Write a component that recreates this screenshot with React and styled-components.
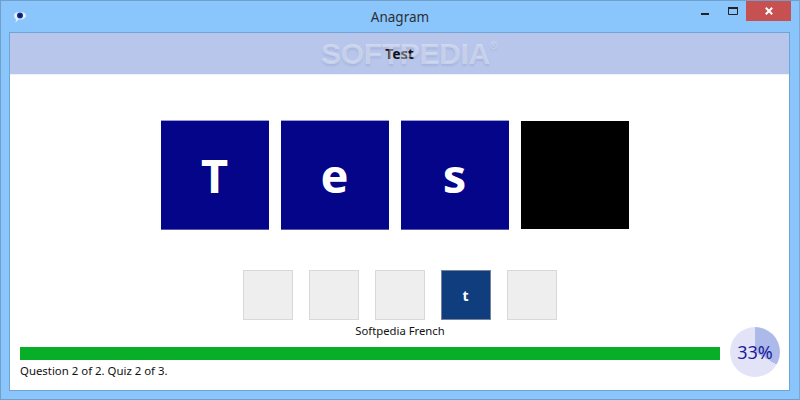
import styled, { createGlobalStyle } from "styled-components";

const GlobalStyle = createGlobalStyle`
  html, body { margin: 0; padding: 0; }
  body { width: 800px; height: 400px; overflow: hidden; font-family: "Noto Sans", "Open Sans", sans-serif; }
`;

const answer = [{ ch: "T" }, { ch: "e" }, { ch: "s" }, { ch: "", blank: true }];
const tray = ["", "", "", "t", ""];

function AppIcon() {
  return (
    <svg width="14" height="14" viewBox="0 0 14 14">
      <path d="M1 5.500C1 3 4 2 7 2s6 1 6 3.500S10 9.500 7 9.500H5.500L2.600 12.500 3 9C1.800 8.400 1 7 1 5.500Z" fill="#e6eefc" />
      <circle cx="7" cy="5.500" r="3" fill="#12309a" />
      <circle cx="7" cy="5.500" r="1.400" fill="#071a55" />
    </svg>
  );
}

function App() {
  return (
    <Win>
      <GlobalStyle />
      <TitleBar>
        <IconSlot><AppIcon /></IconSlot>
        <Title>Anagram</Title>
        <Controls>
          <MinBtn><svg width="8" height="2"><rect width="8" height="2" fill="#222" /></svg></MinBtn>
          <MaxBtn>
            <svg width="10" height="8"><path d="M.5 1.500h9v6h-9z" fill="none" stroke="#222" /><rect width="10" height="2" fill="#222" /></svg>
          </MaxBtn>
          <CloseBtn>
            <svg width="8" height="8" viewBox="0 0 8 8"><path d="M.8.800l6.400 6.400M7.200.800L.8 7.200" stroke="#fff" strokeWidth="2" /></svg>
          </CloseBtn>
        </Controls>
      </TitleBar>
      <Content>
        <Header>
          <Heading>Test</Heading>
          <Watermark>SOFTPEDIA<sup>®</sup></Watermark>
        </Header>
        <Letters>
          {answer.map((a, i) => (
            <LetterTile key={i} $blank={a.blank}>{a.ch}</LetterTile>
          ))}
        </Letters>
        <Tray>
          {tray.map((t, i) => (
            <TrayTile key={i} $filled={!!t}>{t}</TrayTile>
          ))}
        </Tray>
        <Footer>
          <Progress>
            <Label>Softpedia French</Label>
            <Bar />
            <Status>Question 2 of 2. Quiz 2 of 3.</Status>
          </Progress>
          <Dial>33%</Dial>
        </Footer>
      </Content>
    </Win>
  );
}

const Win = styled.div`
  box-sizing: border-box;
  width: 800px;
  height: 400px;
  display: flex;
  flex-direction: column;
  background: #8ac6fb;
  border: 1px solid #6f9fcb;
  border-right-color: #7aa8d4;
`;

const TitleBar = styled.div`
  height: 31px;
  display: grid;
  grid-template-columns: 1fr auto 1fr;
  align-items: start;
`;

const IconSlot = styled.div`
  padding: 9px 0 0 12px;
  line-height: 0;
`;

const Title = styled.div`
  padding-top: 7px;
  font-size: 13.500px;
  line-height: 18px;
  color: #2a2f38;
`;

const Controls = styled.div`
  display: flex;
  justify-content: flex-end;
  padding-right: 8px;
`;

const MinBtn = styled.div`
  width: 26px;
  height: 20px;
  display: flex;
  justify-content: center;
  padding-top: 12px;
  box-sizing: border-box;
`;

const MaxBtn = styled.div`
  width: 26px;
  height: 20px;
  display: flex;
  justify-content: center;
  padding-top: 6px;
  box-sizing: border-box;
  margin-left: 2px;
`;

const CloseBtn = styled.div`
  width: 45px;
  height: 20px;
  background: #c75050;
  display: flex;
  align-items: center;
  justify-content: center;
`;

const Content = styled.div`
  flex: 1;
  margin: 0 9px 8px 8px;
  background: #fff;
  border: 1px solid #6fa5d6;
`;

const Header = styled.div`
  position: relative;
  height: 41px;
  background: #b8c6ec;
  display: flex;
  align-items: center;
  justify-content: center;
  border-bottom: 1px solid #eef1fb;
`;

const Heading = styled.span`
  font-size: 14px;
  font-weight: 700;
  color: #111;
`;

const Watermark = styled.span`
  position: absolute;
  left: 311px;
  top: 3px;
  font-family: "Liberation Sans", sans-serif;
  font-size: 30px;
  font-weight: 700;
  line-height: 36px;
  letter-spacing: -0.3px;
  color: rgba(255, 255, 255, 0.34);
  text-shadow: 0 2px 2px rgba(90, 100, 140, 0.16);
  pointer-events: none;

  sup {
    font-size: 10px;
    font-weight: 400;
    vertical-align: 15px;
    line-height: 0;
  }
`;

const Letters = styled.div`
  display: flex;
  justify-content: center;
  gap: 12px;
  margin-top: 46px;
  padding-right: 10px;
`;

const LetterTile = styled.div`
  width: 108px;
  height: 108px;
  display: flex;
  align-items: center;
  justify-content: center;
  font-size: 47px;
  font-weight: 700;
  color: #fff;
  background: ${(p) => (p.$blank ? "#000" : "#05058a")};
  box-shadow: ${(p) => (p.$blank ? "none" : "0 -1px 0 #9d9dd0, 0 1px 0 #5a5aad")};
`;

const Tray = styled.div`
  display: flex;
  justify-content: center;
  gap: 16px;
  margin-top: 41px;
`;

const TrayTile = styled.div`
  box-sizing: border-box;
  width: 50px;
  height: 50px;
  display: flex;
  align-items: center;
  justify-content: center;
  font-size: 14px;
  font-weight: 700;
  color: #fff;
  background: ${(p) => (p.$filled ? "#103d7e" : "#eeeeee")};
  border: 1px solid ${(p) => (p.$filled ? "#75839b" : "#d8d8d8")};
`;

const Footer = styled.div`
  display: grid;
  grid-template-columns: 700px 50px;
  gap: 10px;
  padding: 3px 10px 0;
`;

const Progress = styled.div`
  display: flex;
  flex-direction: column;
`;

const Label = styled.div`
  padding-left: 60px;
  text-align: center;
  font-size: 11.300px;
  line-height: 16px;
  color: #111;
`;

const Bar = styled.div`
  height: 13px;
  margin-top: 8px;
  background: #08ae28;
`;

const Status = styled.div`
  margin-top: 3px;
  font-size: 11.400px;
  line-height: 16px;
  color: #111;
`;

const Dial = styled.div`
  width: 50px;
  height: 50px;
  margin-top: 4px;
  border-radius: 50%;
  background: conic-gradient(#adb9e9 0 120deg, #e2e3f7 120deg 360deg);
  display: flex;
  align-items: center;
  justify-content: center;
  font-size: 18px;
  color: #1c1c9c;
`;

export default App;
